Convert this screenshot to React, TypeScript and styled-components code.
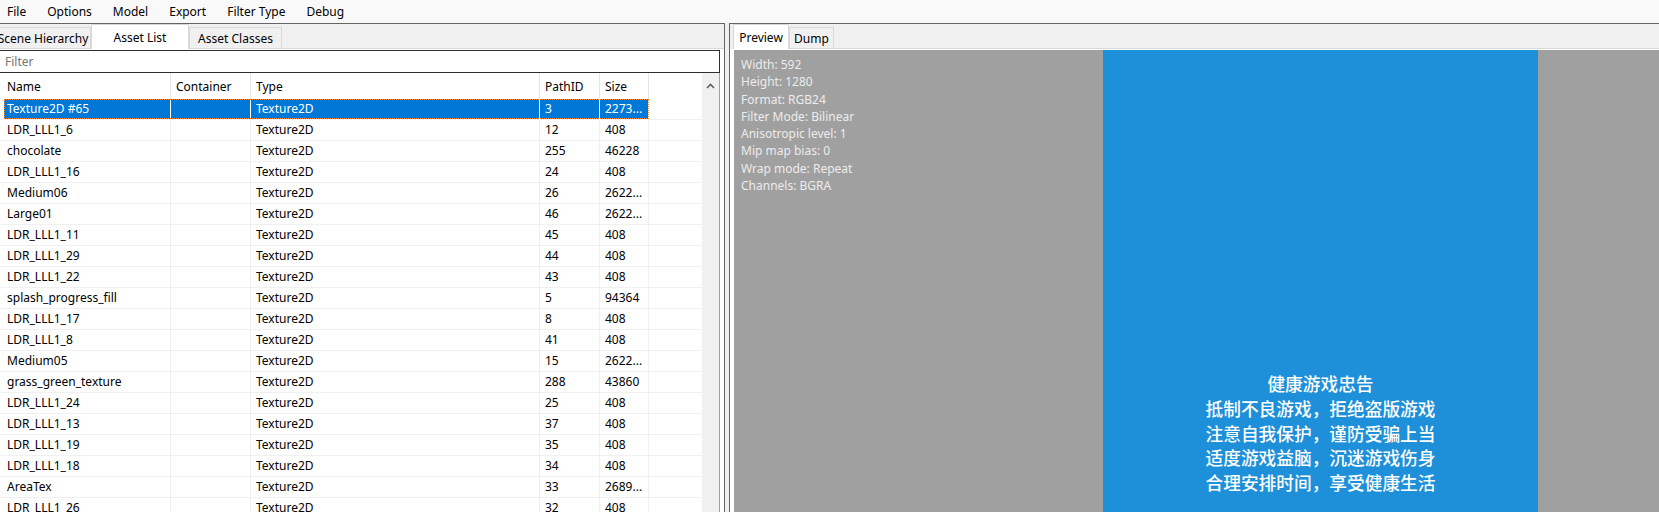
import React from 'react'
import styled, { createGlobalStyle } from 'styled-components'

const GlobalStyle = createGlobalStyle`
  html, body {
    margin: 0;
    padding: 0;
  }
  body {
    width: 1659px;
    height: 512px;
    overflow: hidden;
    background: #f0f0f0;
    font-family: 'Noto Sans', 'Noto Sans CJK SC', sans-serif;
    font-size: 12px;
    color: #000;
  }
`

type Asset = { name: string; type: string; pathId: string; size: string }

const assets: Asset[] = [
  { name: 'Texture2D #65', type: 'Texture2D', pathId: '3', size: '2273...' },
  { name: 'LDR_LLL1_6', type: 'Texture2D', pathId: '12', size: '408' },
  { name: 'chocolate', type: 'Texture2D', pathId: '255', size: '46228' },
  { name: 'LDR_LLL1_16', type: 'Texture2D', pathId: '24', size: '408' },
  { name: 'Medium06', type: 'Texture2D', pathId: '26', size: '2622...' },
  { name: 'Large01', type: 'Texture2D', pathId: '46', size: '2622...' },
  { name: 'LDR_LLL1_11', type: 'Texture2D', pathId: '45', size: '408' },
  { name: 'LDR_LLL1_29', type: 'Texture2D', pathId: '44', size: '408' },
  { name: 'LDR_LLL1_22', type: 'Texture2D', pathId: '43', size: '408' },
  { name: 'splash_progress_fill', type: 'Texture2D', pathId: '5', size: '94364' },
  { name: 'LDR_LLL1_17', type: 'Texture2D', pathId: '8', size: '408' },
  { name: 'LDR_LLL1_8', type: 'Texture2D', pathId: '41', size: '408' },
  { name: 'Medium05', type: 'Texture2D', pathId: '15', size: '2622...' },
  { name: 'grass_green_texture', type: 'Texture2D', pathId: '288', size: '43860' },
  { name: 'LDR_LLL1_24', type: 'Texture2D', pathId: '25', size: '408' },
  { name: 'LDR_LLL1_13', type: 'Texture2D', pathId: '37', size: '408' },
  { name: 'LDR_LLL1_19', type: 'Texture2D', pathId: '35', size: '408' },
  { name: 'LDR_LLL1_18', type: 'Texture2D', pathId: '34', size: '408' },
  { name: 'AreaTex', type: 'Texture2D', pathId: '33', size: '2689...' },
  { name: 'LDR_LLL1_26', type: 'Texture2D', pathId: '32', size: '408' },
]

// column widths incl. the 1px divider
const columns = [
  { title: 'Name', width: 167 },
  { title: 'Container', width: 80 },
  { title: 'Type', width: 289 },
  { title: 'PathID', width: 60 },
  { title: 'Size', width: 49 },
]

const textureInfo = [
  'Width: 592',
  'Height: 1280',
  'Format: RGB24',
  'Filter Mode: Bilinear',
  'Anisotropic level: 1',
  'Mip map bias: 0',
  'Wrap mode: Repeat',
  'Channels: BGRA',
]

const notice = [
  '健康游戏忠告',
  '抵制不良游戏，拒绝盗版游戏',
  '注意自我保护，谨防受骗上当',
  '适度游戏益脑，沉迷游戏伤身',
  '合理安排时间，享受健康生活',
]

export default function App(): JSX.Element {
  return (
    <>
      <GlobalStyle />
      <MenuBarSCP>
        {['File', 'Options', 'Model', 'Export', 'Filter Type', 'Debug'].map(m => (
          <MenuItemSCP key={m}>{m}</MenuItemSCP>
        ))}
      </MenuBarSCP>

      <WorkspaceSCP>
        <PanelSCP $side={'left'}>
          <TabStripSCP $offset={-5}>
            <TabSCP $width={96}>Scene Hierarchy</TabSCP>
            <TabSCP $width={98} $active>
              Asset List
            </TabSCP>
            <TabSCP $width={93}>Asset Classes</TabSCP>
          </TabStripSCP>

          <TabPageSCP $padLeft={0} $padRight={4}>
            <FilterInputSCP placeholder={'Filter'} />

            <ListViewSCP>
              <ListBodySCP>
                <HeaderRowSCP>
                  <GutterSCP />
                  {columns.map(c => (
                    <HeaderCellSCP key={c.title} $width={c.width}>
                      {c.title}
                    </HeaderCellSCP>
                  ))}
                </HeaderRowSCP>

                {assets.map((a, i) => (
                  <RowSCP key={a.name}>
                    <GutterSCP />
                    <RowCellsSCP $selected={i === 0}>
                      {[a.name, '', a.type, a.pathId, a.size].map((v, j) => (
                        <CellSCP key={j} $width={columns[j].width} $selected={i === 0}>
                          {v}
                        </CellSCP>
                      ))}
                    </RowCellsSCP>
                  </RowSCP>
                ))}
              </ListBodySCP>

              <ScrollBarSCP>
                <ScrollButtonSCP>
                  <svg width="9" height="6" viewBox="0 0 9 6">
                    <polyline
                      points="1,5 4.5,1.5 8,5"
                      fill="none"
                      stroke="#606060"
                      strokeWidth="1.6"
                    />
                  </svg>
                </ScrollButtonSCP>
              </ScrollBarSCP>
            </ListViewSCP>
          </TabPageSCP>
        </PanelSCP>

        <SplitterSCP />

        <PanelSCP $side={'right'}>
          <TabStripSCP $offset={3}>
            <TabSCP $width={56} $active>
              Preview
            </TabSCP>
            <TabSCP $width={45}>Dump</TabSCP>
          </TabStripSCP>

          <TabPageSCP $padLeft={4} $padRight={0}>
            <PreviewCanvasSCP>
              <InfoTextSCP>
                {textureInfo.map(t => (
                  <div key={t}>{t}</div>
                ))}
              </InfoTextSCP>
              <TextureImageSCP>
                {notice.map(n => (
                  <NoticeLineSCP key={n}>{n}</NoticeLineSCP>
                ))}
              </TextureImageSCP>
            </PreviewCanvasSCP>
          </TabPageSCP>
        </PanelSCP>
      </WorkspaceSCP>
    </>
  )
}

const MenuBarSCP = styled.div`
  height: 23px;
  display: flex;
  align-items: center;
  gap: 21px;
  padding-left: 7px;
  background: #f9f9f9;
`

const MenuItemSCP = styled.span`
  line-height: 22px;
  white-space: nowrap;
`

const WorkspaceSCP = styled.div`
  display: flex;
  height: 489px;
`

const PanelSCP = styled.section<{ $side: 'left' | 'right' }>`
  box-sizing: border-box;
  display: flex;
  flex-direction: column;
  overflow: hidden;
  background: #f0f0f0;
  border-top: 1px solid #646464;
  ${p =>
    p.$side === 'left'
      ? 'width: 725px; flex: none; border-right: 1px solid #646464;'
      : 'flex: 1; border-left: 1px solid #646464;'}
`

const SplitterSCP = styled.div`
  width: 4px;
  flex: none;
  background: #f0f0f0;
`

const TabStripSCP = styled.div<{ $offset: number }>`
  height: 25px;
  flex: none;
  box-sizing: border-box;
  display: flex;
  align-items: flex-end;
  border-bottom: 1px solid #d9d9d9;
  margin-left: ${p => p.$offset}px;
`

const TabSCP = styled.div<{ $width: number; $active?: boolean }>`
  width: ${p => p.$width}px;
  height: ${p => (p.$active ? 25 : 21)}px;
  margin-bottom: ${p => (p.$active ? -1 : 0)}px;
  box-sizing: border-box;
  flex: none;
  display: flex;
  align-items: center;
  justify-content: center;
  white-space: nowrap;
  border: 1px solid #d9d9d9;
  border-bottom: none;
  background: ${p => (p.$active ? '#fff' : '#f0f0f0')};
  position: relative;
  z-index: ${p => (p.$active ? 1 : 0)};
`

const TabPageSCP = styled.div<{ $padLeft: number; $padRight: number }>`
  flex: 1;
  min-height: 0;
  display: flex;
  flex-direction: column;
  overflow: hidden;
  background: #fff;
  padding: 1px ${p => p.$padRight}px 0 ${p => p.$padLeft}px;
`

const FilterInputSCP = styled.input`
  flex: none;
  box-sizing: border-box;
  height: 23px;
  width: 100%;
  margin: 0;
  padding: 0 0 0 5px;
  border: 1px solid #2e2e2e;
  border-left: none;
  outline: none;
  font: inherit;
  background: #fff;

  &::placeholder {
    color: #757575;
  }
`

const ListViewSCP = styled.div`
  flex: 1;
  min-height: 0;
  display: flex;
  background: #fff;
  border-right: 1px solid #a0a0a0;
`

const ListBodySCP = styled.div`
  width: 702px;
  flex: none;
  overflow: hidden;
`

const GutterSCP = styled.div`
  width: 4px;
  flex: none;
`

const HeaderRowSCP = styled.div`
  display: flex;
  height: 26px;
`

const HeaderCellSCP = styled.div<{ $width: number }>`
  width: ${p => p.$width}px;
  flex: none;
  box-sizing: border-box;
  border-right: 1px solid #e5e5e5;
  padding: 1px 0 0 5px;
  line-height: 25px;
  white-space: nowrap;

  &:nth-child(2) {
    padding-left: 3px;
  }
`

const RowSCP = styled.div`
  display: flex;
  height: 21px;
  box-sizing: border-box;
  border-bottom: 1px solid #f0f0f0;
`

const RowCellsSCP = styled.div<{ $selected: boolean }>`
  display: flex;
  outline: ${p => (p.$selected ? '1px dotted #ff8728' : 'none')};
  outline-offset: -1px;
`

const CellSCP = styled.div<{ $width: number; $selected: boolean }>`
  width: ${p => p.$width}px;
  flex: none;
  box-sizing: border-box;
  height: 20px;
  line-height: 20px;
  padding-left: 5px;
  white-space: nowrap;
  overflow: hidden;
  border-right: 1px solid ${p => (p.$selected ? '#fff' : '#f0f0f0')};
  background: ${p => (p.$selected ? '#0078d7' : 'transparent')};
  color: ${p => (p.$selected ? '#fff' : '#000')};

  &:first-child {
    padding-left: 3px;
  }
`

const ScrollBarSCP = styled.div`
  width: 17px;
  flex: none;
  background: #f0f0f0;
`

const ScrollButtonSCP = styled.div`
  height: 25px;
  display: flex;
  align-items: center;
  justify-content: center;
  padding-right: 1px;
`

const PreviewCanvasSCP = styled.div`
  position: relative;
  width: 1173px;
  height: 941px;
  flex: none;
  display: flex;
  justify-content: center;
  background: #a0a0a0;
`

const InfoTextSCP = styled.div`
  position: absolute;
  top: 6px;
  left: 7px;
  color: #ececec;
  line-height: 17.3px;
`

const TextureImageSCP = styled.div`
  width: 435px;
  height: 941px;
  box-sizing: border-box;
  padding-top: 321px;
  display: flex;
  flex-direction: column;
  align-items: center;
  background: #1e8fd9;
`

const NoticeLineSCP = styled.div`
  font-family: 'Noto Sans CJK SC', sans-serif;
  font-size: 17.7px;
  font-weight: 500;
  line-height: 24.8px;
  color: #fff;
  white-space: nowrap;
`
